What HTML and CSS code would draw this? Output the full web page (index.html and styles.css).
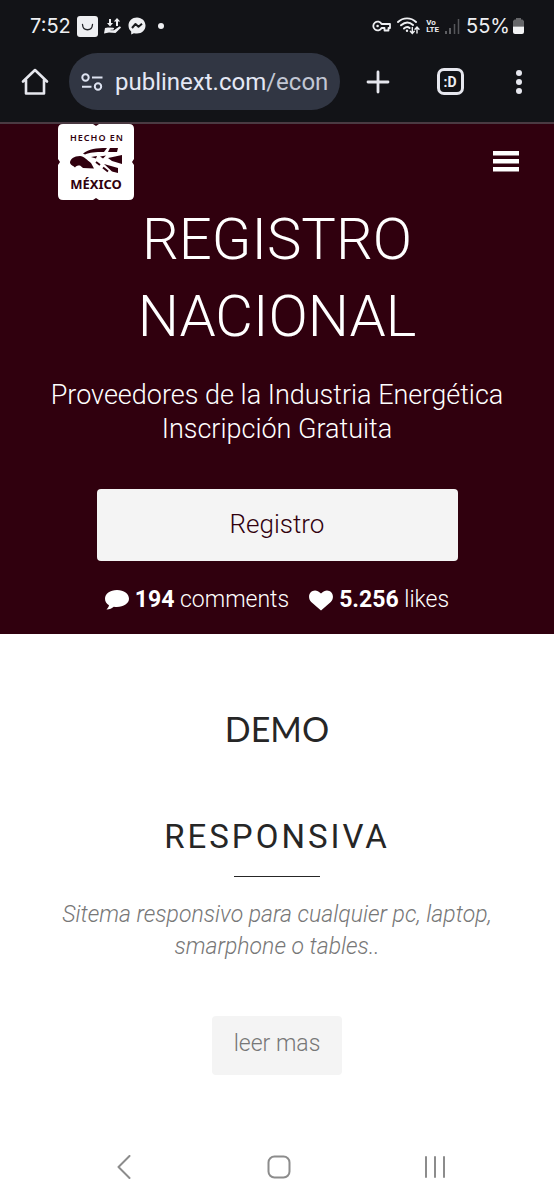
FILE: index.html
```html
<!DOCTYPE html>
<html lang="es">
<head>
<meta charset="utf-8">
<meta name="viewport" content="width=device-width, initial-scale=1">
<title>Registro Nacional</title>
<link rel="stylesheet" href="styles.css">
</head>
<body>
<div class="screen">
  <header class="browser">
    <div class="status">
      <div class="status-left">
        <span class="clock">7:52</span>
        <svg width="21" height="21" viewBox="0 0 21 21" aria-hidden="true"><rect width="21" height="21" rx="3" fill="#eeeff2"/><path d="M5.500 8.500C6 15.500 15 15.500 15.500 8.500" fill="none" stroke="#222327" stroke-width="1.300" stroke-linecap="round"/></svg>
        <svg width="18" height="18" viewBox="0 0 18 18" fill="#eeeff2" aria-hidden="true"><path d="M5 2h2v4h2L6 9.500 3 6h2zM12 9V4.500H9.800L13 1l3.200 3.500H14V9z"/><path d="M1 11l3-.5 5 .3c1.500.2 1.300 1.800 0 1.900H6.500v.6H10l5-3.500c1.200-.7 2.500.3 1.600 1.300L11.500 16 5 15.500 0 16.500z"/></svg>
        <svg width="18" height="18" viewBox="0 0 18 18" aria-hidden="true"><path d="M9 .5C4.200.5.500 3.900.500 8.600c0 2.500 1 4.500 2.700 6v2.800l2.700-1.200c1 .3 2 .4 3.100.4 4.900 0 8.500-3.500 8.500-8S13.900.5 9 .5z" fill="#eeeff2"/><path d="M4 11l3.500-4 3 2.700L14 6.800" fill="none" stroke="#17181b" stroke-width="2" stroke-linejoin="round"/></svg>
        <svg class="dot" width="6" height="6" viewBox="0 0 6 6" aria-hidden="true"><circle cx="3" cy="3" r="3" fill="#eeeff2"/></svg>
      </div>
      <div class="status-right">
        <svg width="19" height="12" viewBox="0 0 19 12" fill="none" stroke="#eeeff2" stroke-width="1.800" stroke-linejoin="round" aria-hidden="true"><path d="M9.600 4A4.400 4.400 0 1 0 9.600 8H12.500V10.500H16.500V8H18V4Z"/><circle cx="5.600" cy="6" r="1.300" fill="#eeeff2" stroke="none"/></svg>
        <svg width="23" height="18" viewBox="0 0 23 18" fill="none" stroke="#eeeff2" stroke-width="1.900" stroke-linecap="round" aria-hidden="true"><path d="M1 5C6 .2 14 .2 19 5M4 8.300C8 4.700 12.500 4.700 16 8M7 11.500C9 9.600 11 9.600 12.600 11"/><circle cx="10" cy="13.700" r="1.200" fill="#eeeff2" stroke="none"/><path d="M15.300 10.500V16M13.300 14.200l2 2.200 2-2.200M20 16V10.500M18 12.300l2-2.200 2 2.200" stroke-width="1.400"/></svg>
        <span class="volte"><span>Vo</span><span>LTE</span></span>
        <svg width="15" height="15" viewBox="0 0 15 15" aria-hidden="true"><path d="M1 12v3M5 9v6" stroke="#77787c" stroke-width="1.500"/><path d="M9.500 5v10M13.500 0v15" stroke="#55565a" stroke-width="1.500"/></svg>
        <span class="clock">55%</span>
        <svg width="11" height="16" viewBox="0 0 11 16" aria-hidden="true"><path d="M3 0h5v1.500h1.500L11 3v5.500H0V3l1.500-1.500H3z" fill="#66676a"/><path d="M0 8.500h11V14a2 2 0 0 1-2 2H2a2 2 0 0 1-2-2z" fill="#f2f3f5"/></svg>
      </div>
    </div>
    <div class="toolbar">
      <button class="tool" type="button" aria-label="Inicio"><svg width="28" height="28" viewBox="0 0 28 28" fill="none" stroke="#e6e7ee" stroke-width="2.600" stroke-linejoin="round" stroke-linecap="round"><path d="M2 13.500L14 2l12 11.500M5 12v13.500h18V12"/></svg></button>
      <button class="address" type="button">
        <svg width="22" height="18" viewBox="0 0 22 18" fill="none" stroke="#dde2f0" stroke-width="2" aria-hidden="true"><circle cx="4.500" cy="4.500" r="3.200"/><path d="M11 4.500h10.500M1 13.800h9.500"/><circle cx="17" cy="13.500" r="3.200"/></svg>
        <span class="url">publinext.com<span class="path">/econ</span></span>
      </button>
      <button class="tool" type="button" aria-label="Nueva pestaña"><svg width="24" height="24" viewBox="0 0 24 24" stroke="#e6e7ee" stroke-width="2.800" stroke-linecap="round"><path d="M12 2v20M2 12h20"/></svg></button>
      <button class="tool" type="button" aria-label="Pestañas"><span class="tabs">:D</span></button>
      <button class="tool" type="button" aria-label="Más opciones"><svg width="8" height="24" viewBox="0 0 8 24" fill="#e6e7ee"><circle cx="4" cy="3" r="3"/><circle cx="4" cy="12" r="3"/><circle cx="4" cy="21" r="3"/></svg></button>
    </div>
  </header>

  <section class="hero">
    <div class="brandbar">
      <a class="logo" href="#" aria-label="Hecho en México">
        <svg width="78" height="76" viewBox="0 0 78 76">
          <path d="M6 0h30l3 2 3-2h30q5 0 5 5v30l-2 3 2 3v30q0 5-5 5H42l-3-2-3 2H6q-5 0-5-5V41l2-3-2-3V5q0-5 5-5z" fill="#fff"/>
          <g fill="#30000e">
            <text class="logo-small" x="40" y="17" text-anchor="middle">HECHO EN</text>
            <path d="M13 39C13 35 17 32 23 32C27 32 30 36 34 39L37 44.500L26 44L23 41.500C20 41.500 19 42 18 43.500C16 41.500 14 41.500 13 39z"/>
            <path d="M26 29.500C32 25 39 24 50 24L47 28C38 28 33 28.500 28 30.500zM53 24h8l-1 4h-9z"/>
            <path d="M34 33l6-1-1 2.500zM43 32.500l6-1-3 3zM51 34l14-3v9l-10-3zM47 40l14 4v5l-6-1.500z"/>
            <path d="M39 38l4 3M46 43.500l5 4" fill="none" stroke="#30000e" stroke-width="2"/>
            <text class="logo-large" x="39" y="65" text-anchor="middle">MÉXICO</text>
          </g>
        </svg>
      </a>
      <button class="burger" type="button" aria-label="Menú"><svg width="26" height="21" viewBox="0 0 26 21" fill="#fff"><path d="M0 0h26v4.500H0zM0 8h26v4.500H0zM0 16h26v4.500H0z"/></svg></button>
    </div>
    <h1>REGISTRO<br>NACIONAL</h1>
    <p class="lead">Proveedores de la Industria Energética<br>Inscripción Gratuita</p>
    <a class="register" href="#">Registro</a>
    <div class="counts">
      <span class="count"><svg width="24" height="20" viewBox="0 0 24 20" fill="#fff" aria-hidden="true"><path d="M12 0C5 0 0 3.700 0 8.800c0 2.800 1.500 5 4 6.500-.3 1.800-1.300 3-2.500 4.200 2.800.1 5.500-1 7.300-2.700 8.500 1.200 15.200-2.800 15.200-8C24 3.700 19 0 12 0z"/></svg><span><b>194</b> comments</span></span>
      <span class="count"><svg width="24" height="21" viewBox="0 0 24 21" fill="#fff" aria-hidden="true"><path d="M12 20.500L2.200 12C-4 5 4.500-4.500 12 3.500 19.500-4.500 28 5 21.800 12z"/></svg><span><b>5.256</b> likes</span></span>
    </div>
  </section>

  <main class="content">
    <h2>DEMO</h2>
    <h3>RESPONSIVA</h3>
    <hr>
    <p class="text">Sitema responsivo para cualquier pc, laptop, smarphone o tables..</p>
    <a class="more" href="#">leer mas</a>
  </main>

  <nav class="system">
    <button type="button" aria-label="Atrás"><svg width="14" height="24" viewBox="0 0 14 24"><path d="M12.500 1L1.500 12l11 11"/></svg></button>
    <button type="button" aria-label="Inicio del teléfono"><svg width="24" height="24" viewBox="0 0 24 24"><rect x="1.500" y="1.500" width="21" height="21" rx="6"/></svg></button>
    <button type="button" aria-label="Recientes"><svg width="22" height="22" viewBox="0 0 22 22"><path d="M2 1v20M11 1v20M20 1v20"/></svg></button>
  </nav>
</div>
</body>
</html>
```
FILE: styles.css
```css
* { box-sizing: border-box; }
body {
  margin: 0;
  background: #fff;
  color: #262626;
  font-family: Roboto, "Liberation Sans", sans-serif;
  font-weight: 300;
}
button { margin: 0; padding: 0; border: 0; background: none; color: inherit; font: inherit; }
a { color: inherit; text-decoration: none; }
svg { display: block; flex: none; }
h1, h2, h3, p { margin: 0; }
.screen { display: flex; flex-direction: column; min-height: 100vh; text-align: center; }

.browser { background: #121317; color: #eeeff2; border-bottom: 2px solid #4a3a42; }
.status { display: flex; justify-content: space-between; align-items: center; height: 52px; padding: 0 30px; }
.status-left, .status-right { display: flex; align-items: center; gap: 6px; }
.clock { font-family: Inter, Roboto, sans-serif; font-size: 20px; font-weight: 400; }
.dot { margin-left: 6px; }
.volte { display: flex; flex-direction: column; font-size: 8px; line-height: 7px; font-weight: 700; text-align: left; }
.status-right .clock { margin-right: -3px; }

.toolbar { display: grid; grid-template-columns: 69px minmax(0, 1fr) 76px 68px 70px; align-items: center; height: 70px; padding-bottom: 11px; }
.tool { display: flex; justify-content: center; align-items: center; height: 48px; }
.address {
  display: flex; align-items: center; gap: 12px; height: 57px; padding: 0 12px;
  border-radius: 29px; background: #313643; color: #e4e8f5;
  font-size: 24px; font-weight: 400; overflow: hidden;
}
.url { white-space: nowrap; }
.path { color: #c2c7d4; }
.tabs {
  display: flex; justify-content: center; align-items: center; width: 27px; height: 27px;
  border: 3px solid #e6e7ee; border-radius: 7px; font-size: 14px; font-weight: 700;
}

.hero { padding: 0 24px 17px; background: #30000e; color: #fff; }
.brandbar { display: flex; justify-content: space-between; align-items: center; padding: 0 11px 0 33px; }
.burger { padding-bottom: 2px; }
.logo-small { font: 600 9px "Noto Sans", sans-serif; letter-spacing: 1px; }
.logo-large { font: 700 13px "Noto Sans", sans-serif; }
h1 { padding-top: 1px; font-size: 58px; line-height: 77px; font-weight: 300; }
.lead { margin-top: 23px; font-size: 27px; line-height: 34px; }
.register {
  display: block; width: 361px; max-width: 100%; margin: 43px auto 0; padding: 18px 0 20px;
  border-radius: 4px; background: #f4f4f4; color: #30000e; font-size: 26px; line-height: 34px;
}
.counts { display: flex; justify-content: center; gap: 20px; margin-top: 22px; font-size: 23px; line-height: 34px; }
.count { display: flex; align-items: center; gap: 6px; }
b { font-weight: 700; }

.content { display: flex; flex-direction: column; align-items: center; flex: 1; padding: 75px 56px 48px; }
h2 { font-family: Lato, sans-serif; font-size: 34px; line-height: 40px; font-weight: 400; }
h3 { margin-top: 68px; font-size: 33px; line-height: 40px; font-weight: 400; letter-spacing: 3px; }
hr { width: 86px; margin: 19px 0 0; border: 0; border-top: 1px solid #262626; }
.text { margin-top: 22px; color: #777; font-size: 23px; line-height: 32px; font-style: italic; }
.more { margin-top: 53px; padding: 12px 22px 15px; border-radius: 4px; background: #f4f4f4; color: #777; font-size: 23px; line-height: 32px; }

.system { display: grid; grid-template-columns: repeat(3, 1fr); align-items: center; height: 67px; padding: 0 41px 0 46px; }
.system button { display: flex; justify-content: center; }
.system svg { fill: none; stroke: #8c8c8c; stroke-width: 2; stroke-linecap: round; stroke-linejoin: round; }
```
